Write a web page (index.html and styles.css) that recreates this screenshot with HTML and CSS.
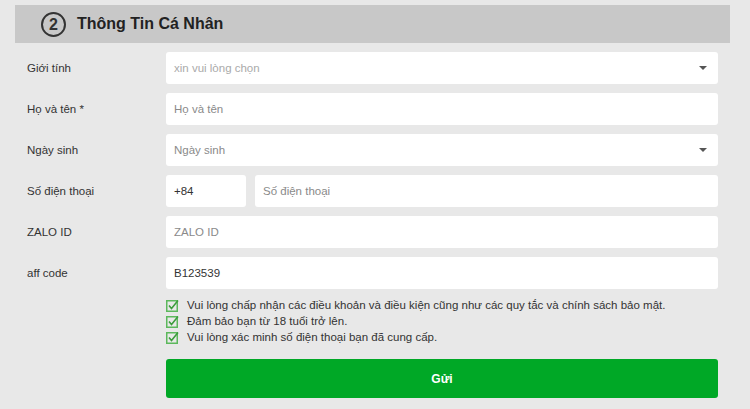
FILE: index.html
```html
<!DOCTYPE html>
<html lang="vi">
<head>
<meta charset="utf-8">
<title>Thông Tin Cá Nhân</title>
<link rel="stylesheet" href="styles.css">
</head>
<body>
<div class="page">
  <div class="header">
    <span class="num">2</span>
    <h2 class="title">Thông Tin Cá Nhân</h2>
  </div>
  <form class="form">
    <div class="row">
      <label class="label">Giới tính</label>
      <div class="field select"><span class="ph light">xin vui lòng chọn</span><span class="caret"></span></div>
    </div>
    <div class="row">
      <label class="label">Họ và tên *</label>
      <div class="field"><span class="ph">Họ và tên</span></div>
    </div>
    <div class="row">
      <label class="label">Ngày sinh</label>
      <div class="field select"><span class="ph">Ngày sinh</span><span class="caret"></span></div>
    </div>
    <div class="row">
      <label class="label">Số điện thoại</label>
      <div class="phone">
        <div class="field code"><span class="val">+84</span></div>
        <div class="field"><span class="ph">Số điện thoại</span></div>
      </div>
    </div>
    <div class="row">
      <label class="label">ZALO ID</label>
      <div class="field"><span class="ph">ZALO ID</span></div>
    </div>
    <div class="row">
      <label class="label">aff code</label>
      <div class="field"><span class="val">B123539</span></div>
    </div>
    <ul class="checks">
      <li><svg class="cb" viewBox="0 0 13 13" width="13" height="13"><rect x="0.75" y="1.75" width="10.5" height="10.5" fill="none" stroke="#5cb85c" stroke-width="1.5"/><path d="M3 6.5 L5.5 9.5 L12 1.5" fill="none" stroke="#3c9c3c" stroke-width="1.6"/></svg>Vui lòng chấp nhận các điều khoản và điều kiện cũng như các quy tắc và chính sách bảo mật.</li>
      <li><svg class="cb" viewBox="0 0 13 13" width="13" height="13"><rect x="0.75" y="1.75" width="10.5" height="10.5" fill="none" stroke="#5cb85c" stroke-width="1.5"/><path d="M3 6.5 L5.5 9.5 L12 1.5" fill="none" stroke="#3c9c3c" stroke-width="1.6"/></svg>Đảm bảo bạn từ 18 tuổi trở lên.</li>
      <li><svg class="cb" viewBox="0 0 13 13" width="13" height="13"><rect x="0.75" y="1.75" width="10.5" height="10.5" fill="none" stroke="#5cb85c" stroke-width="1.5"/><path d="M3 6.5 L5.5 9.5 L12 1.5" fill="none" stroke="#3c9c3c" stroke-width="1.6"/></svg>Vui lòng xác minh số điện thoại bạn đã cung cấp.</li>
    </ul>
    <button type="button" class="submit">Gửi</button>
  </form>
</div>
</body>
</html>
```

FILE: styles.css
```css
html, body {
  margin: 0;
  padding: 0;
  background: #e8e8e8;
  font-family: "Liberation Sans", Arial, sans-serif;
  color: #333;
}
.page {
  width: 715px;
  padding: 5px 0 0 15px;
}
.header {
  height: 38px;
  background: #c8c8c8;
  display: flex;
  align-items: center;
  padding-left: 26px;
  gap: 11px;
}
.num {
  width: 21px;
  height: 21px;
  border: 2px solid #333;
  border-radius: 50%;
  display: flex;
  align-items: center;
  justify-content: center;
  font-weight: bold;
  font-size: 16px;
  color: #333;
  box-sizing: content-box;
  margin-top: 1px;
}
.title {
  margin: 0;
  font-size: 16px;
  font-weight: bold;
  color: #222;
}
.form {
  display: flex;
  flex-direction: column;
  padding-top: 9px;
}
.row {
  display: flex;
  align-items: center;
  height: 32px;
  margin-bottom: 9px;
}
.label {
  width: 151px;
  padding-left: 12px;
  box-sizing: border-box;
  font-size: 11.5px;
  color: #333;
}
.field {
  flex: 1;
  height: 32px;
  background: #fff;
  border-radius: 3px;
  display: flex;
  align-items: center;
  padding: 0 8px;
  box-sizing: border-box;
  font-size: 11.5px;
  max-width: 552px;
}
.select {
  justify-content: space-between;
  padding-right: 11px;
}
.ph { color: #8a8a8a; }
.ph.light { color: #aaa; }
.val { color: #333; }
.caret {
  width: 0;
  height: 0;
  border-left: 4px solid transparent;
  border-right: 4px solid transparent;
  border-top: 4px solid #555;
}
.phone {
  display: flex;
  gap: 9px;
  width: 552px;
}
.code {
  flex: 0 0 80px;
}
.checks {
  list-style: none;
  margin: -1px 0 0 151px;
  padding: 0;
  font-size: 11.5px;
  color: #333;
}
.checks li {
  display: flex;
  align-items: center;
  height: 16px;
}
.cb {
  margin: 0 8px 0 0;
  flex: 0 0 13px;
}
.submit {
  margin: 14px 0 0 151px;
  width: 552px;
  height: 39px;
  border: none;
  border-radius: 3px;
  background: #00a826;
  color: #fff;
  font-family: "Liberation Sans", Arial, sans-serif;
  font-weight: bold;
  font-size: 12px;
}
```
